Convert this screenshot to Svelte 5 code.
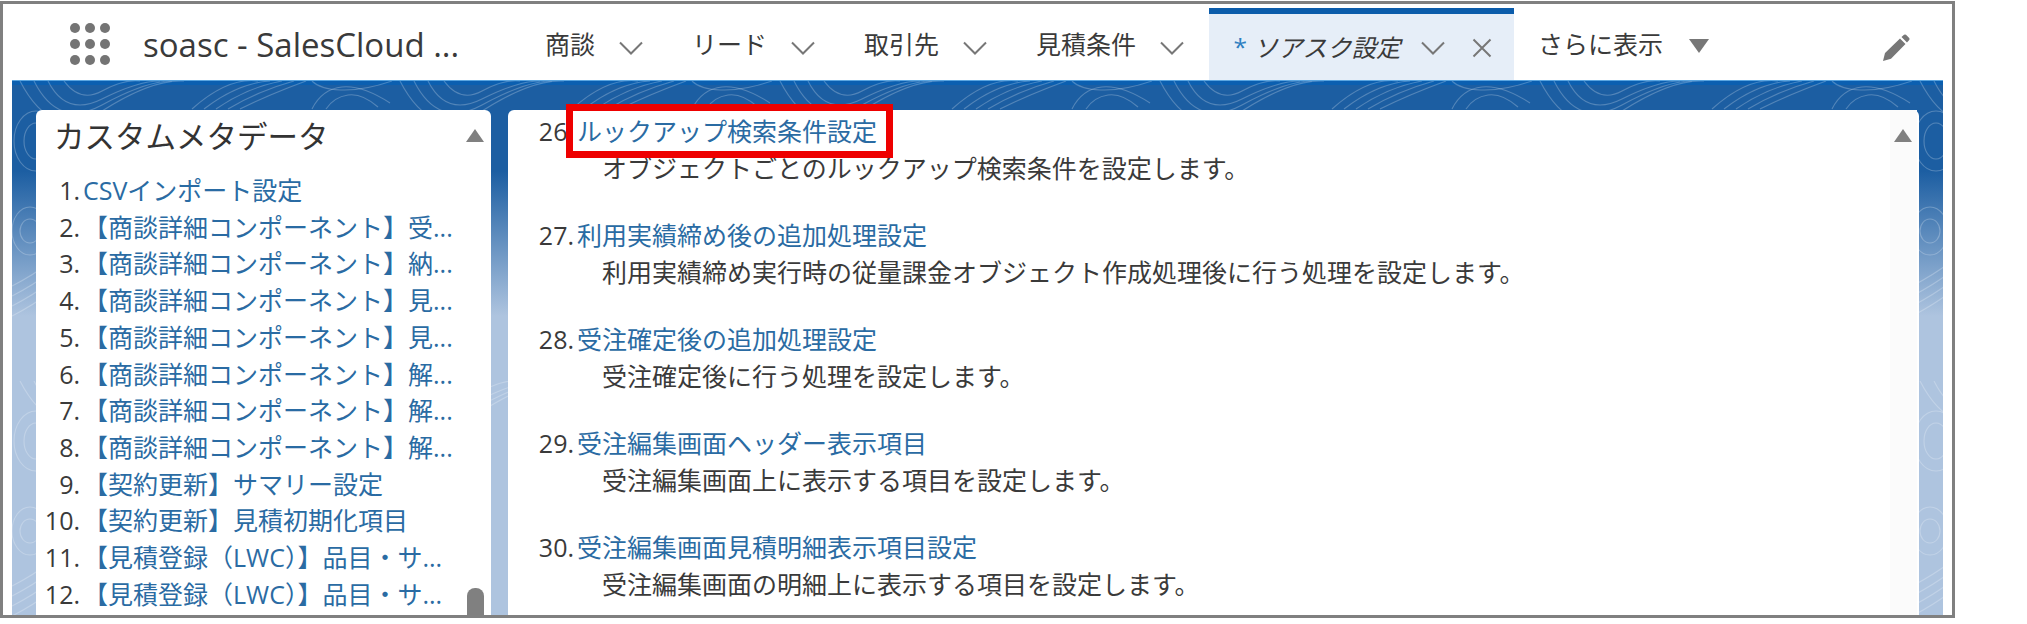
<script lang="ts">
  const tabs = ["商談", "リード", "取引先", "見積条件"];

  const metadata = [
    "CSVインポート設定",
    "【商談詳細コンポーネント】受...",
    "【商談詳細コンポーネント】納...",
    "【商談詳細コンポーネント】見...",
    "【商談詳細コンポーネント】見...",
    "【商談詳細コンポーネント】解...",
    "【商談詳細コンポーネント】解...",
    "【商談詳細コンポーネント】解...",
    "【契約更新】サマリー設定",
    "【契約更新】見積初期化項目",
    "【見積登録（LWC）】品目・サ...",
    "【見積登録（LWC）】品目・サ...",
  ];

  const settings = [
    { no: 26, title: "ルックアップ検索条件設定", desc: "オブジェクトごとのルックアップ検索条件を設定します。" },
    { no: 27, title: "利用実績締め後の追加処理設定", desc: "利用実績締め実行時の従量課金オブジェクト作成処理後に行う処理を設定します。" },
    { no: 28, title: "受注確定後の追加処理設定", desc: "受注確定後に行う処理を設定します。" },
    { no: 29, title: "受注編集画面ヘッダー表示項目", desc: "受注編集画面上に表示する項目を設定します。" },
    { no: 30, title: "受注編集画面見積明細表示項目設定", desc: "受注編集画面の明細上に表示する項目を設定します。" },
  ];
</script>

{#snippet chevron()}
  <svg class="chev" viewBox="0 0 24 14" width="24" height="14">
    <path d="M1 1.5 L12 12.5 L23 1.5" fill="none" stroke="#777" stroke-width="2" />
  </svg>
{/snippet}

<div class="frame">
  <header class="appbar">
    <div class="launcher">
      {#each Array(9) as _}
        <i></i>
      {/each}
    </div>
    <div class="appname">soasc - SalesCloud ...</div>

    <nav class="tabs">
      {#each tabs as tab}
        <div class="tab">
          <span>{tab}</span>
          {@render chevron()}
        </div>
      {/each}

      <div class="tab active">
        <span class="star">*</span>
        <span class="italic">ソアスク設定</span>
        {@render chevron()}
        <svg class="close" viewBox="0 0 20 20" width="20" height="20">
          <path d="M1.5 1.5 L18.5 18.5 M18.5 1.5 L1.5 18.5" fill="none" stroke="#777" stroke-width="2" />
        </svg>
      </div>

      <div class="tab more">
        <span>さらに表示</span>
        <svg viewBox="0 0 20 14" width="20" height="14">
          <path d="M0 0 H20 L10 14 Z" fill="#777" />
        </svg>
      </div>
    </nav>

    <svg class="pencil" viewBox="0 0 28 28" width="28" height="28">
      <path d="M1 27 L3 19 L18 4.5 L23.5 10 L9 24.8 Z M19.5 3 L22 0.8 Q23 0 24 0.8 L27.2 4 Q28 5 27.2 6 L25 8.5 Z" fill="#777" />
    </svg>
  </header>

  <main class="workspace">
    <svg class="topo" width="100%" height="100%" aria-hidden="true">
      <defs>
        <pattern id="topo" width="380" height="300" patternUnits="userSpaceOnUse">
          <g fill="none" stroke="#fff" stroke-opacity="0.24" stroke-width="1.1">
            <path d="M8 0 Q40 62 90 30 T172 0" />
            <path d="M22 0 Q46 48 90 24 T160 0" />
            <path d="M36 0 Q54 36 90 18 T148 0" />
            <path d="M52 0 Q68 22 90 10 T128 0" />
            <path d="M180 28 Q216 -4 246 0 M192 28 Q226 2 258 0 M204 28 Q236 6 270 0 M216 28 Q246 10 282 0 M228 28 Q256 14 294 0" />
            <path d="M300 28 Q310 8 330 6 T378 22" />
            <path d="M314 28 Q322 16 336 14 T366 26" />
            <path d="M300 0 C310 10 340 14 380 0" />
            <ellipse cx="24" cy="60" rx="22" ry="30" />
            <ellipse cx="24" cy="60" rx="12" ry="18" />
            <ellipse cx="18" cy="150" rx="10" ry="12" />
            <ellipse cx="18" cy="150" rx="18" ry="24" />
            <path d="M0 205 Q20 195 40 180 M0 215 Q20 205 40 190 M0 225 Q20 215 40 200 M0 235 Q20 225 40 210" />
          </g>
        </pattern>
      </defs>
      <rect width="100%" height="100%" fill="url(#topo)" />
    </svg>

    <section class="panel side">
      <h2>カスタムメタデータ</h2>
      <div class="side-list">
        {#each metadata as item, i}
          <div class="side-row">
            <span class="no">{i + 1}.</span>
            <span class="link">{item}</span>
          </div>
        {/each}
      </div>
      <span class="arrow"></span>
      <span class="thumb"></span>
    </section>

    <section class="panel content">
      {#each settings as s}
        <div class="setting">
          <div class="setting-title">
            <span class="no">{s.no}.</span>
            <span class="link">{s.title}</span>
          </div>
          <div class="setting-desc">{s.desc}</div>
        </div>
      {/each}
      <span class="track"></span>
      <span class="arrow"></span>
    </section>

    <div class="highlight"></div>
  </main>
</div>

<style>
  :global(body) {
    margin: 0;
    background: #fff;
  }

  .frame {
    box-sizing: border-box;
    width: 1955px;
    height: 617px;
    margin-top: 1px;
    border: 3px solid #808080;
    display: flex;
    flex-direction: column;
    overflow: hidden;
    color: #3a3a3a;
    font-family: "Open Sans", "Noto Sans CJK JP", sans-serif;
    font-size: 25px;
  }

  .appbar {
    height: 76px;
    flex-shrink: 0;
    display: flex;
    align-items: stretch;
    background: #fff;
  }

  .launcher {
    width: 40px;
    height: 42px;
    margin: 19px 0 0 67px;
    display: grid;
    grid-template-columns: repeat(3, 10px);
    grid-auto-rows: 10px;
    justify-content: space-between;
    align-content: space-between;
  }

  .launcher i {
    border-radius: 50%;
    background: #747474;
  }

  .appname {
    width: 377.5px;
    margin-left: 33px;
    line-height: 82px;
    font-size: 33px;
    white-space: nowrap;
  }

  .tabs {
    display: flex;
    flex: 1;
    margin-top: 4px;
  }

  .tab {
    display: flex;
    align-items: center;
    gap: 24px;
    padding: 0 24.5px;
    height: 68px;
    margin-top: 1px;
    white-space: nowrap;
  }

  .tab .chev {
    margin-top: 9px;
  }

  .tab.active {
    box-sizing: border-box;
    width: 305px;
    height: 74px;
    margin-top: 0;
    padding: 0 22px 4px 25px;
    gap: 0;
    font-size: 24.5px;
    background: #e6eef8;
    border-top: 6px solid #0b5cab;
  }

  .star {
    width: 20px;
    color: #2f7fc1;
  }

  .italic {
    font-style: italic;
    width: 168px;
  }

  .active .chev {
    flex-shrink: 0;
    margin-top: 4px;
  }

  .close {
    margin-left: 27px;
    margin-top: 3px;
    flex-shrink: 0;
  }

  .more {
    gap: 26px;
  }

  .more svg {
    margin-top: 5px;
  }

  .pencil {
    margin: 30px 42px 0 0;
  }

  .workspace {
    position: relative;
    flex: 1;
    min-height: 0;
    margin: 0 9px;
    padding: 29px 24px 0;
    display: flex;
    gap: 17px;
    border-top: 1px solid #5aa5e0;
    box-shadow: inset 0 4px 0 #0b5fb0;
    background: linear-gradient(#1c5ea2 0, #1c5ea2 90px, #aec4df 235px, #aec4df 100%);
  }

  .topo {
    position: absolute;
    inset: 0;
    pointer-events: none;
  }

  .panel {
    position: relative;
    box-sizing: border-box;
    background: #fff;
    border-radius: 6px 6px 0 0;
  }

  .side {
    width: 455px;
    flex-shrink: 0;
    padding: 6px 0 0 18px;
  }

  .side h2 {
    margin: 0;
    font-size: 30.5px;
    font-weight: 400;
    line-height: 40px;
    color: #333;
  }

  .side-list {
    margin: 16px 0 0 -18px;
  }

  .side-row {
    display: grid;
    grid-template-columns: 44px 1fr;
    column-gap: 3px;
    line-height: 36.7px;
    white-space: nowrap;
  }

  .no {
    font-size: 25px;
    text-align: right;
  }

  .link {
    color: #2a6ba3;
  }

  .content {
    flex: 1;
    padding-top: 3px;
  }

  .setting {
    height: 104px;
  }

  .setting-title {
    display: grid;
    grid-template-columns: 66px 1fr;
    column-gap: 3px;
    line-height: 37px;
  }

  .setting-desc {
    margin-left: 94px;
    line-height: 37px;
  }

  .arrow {
    position: absolute;
    top: 19px;
    right: 7px;
    width: 18px;
    height: 13px;
    background: #808080;
    clip-path: polygon(50% 0, 100% 100%, 0 100%);
  }

  .thumb {
    position: absolute;
    top: 478px;
    right: 7px;
    width: 17px;
    height: 30px;
    border-radius: 8px 8px 0 0;
    background: #808080;
  }

  .track {
    position: absolute;
    top: 0;
    bottom: 0;
    right: 2px;
    width: 27px;
    background: #fbfbfb;
  }

  .highlight {
    position: absolute;
    box-sizing: border-box;
    left: 554px;
    top: 23px;
    width: 327px;
    height: 54px;
    border: 7px solid #ee0000;
  }
</style>
